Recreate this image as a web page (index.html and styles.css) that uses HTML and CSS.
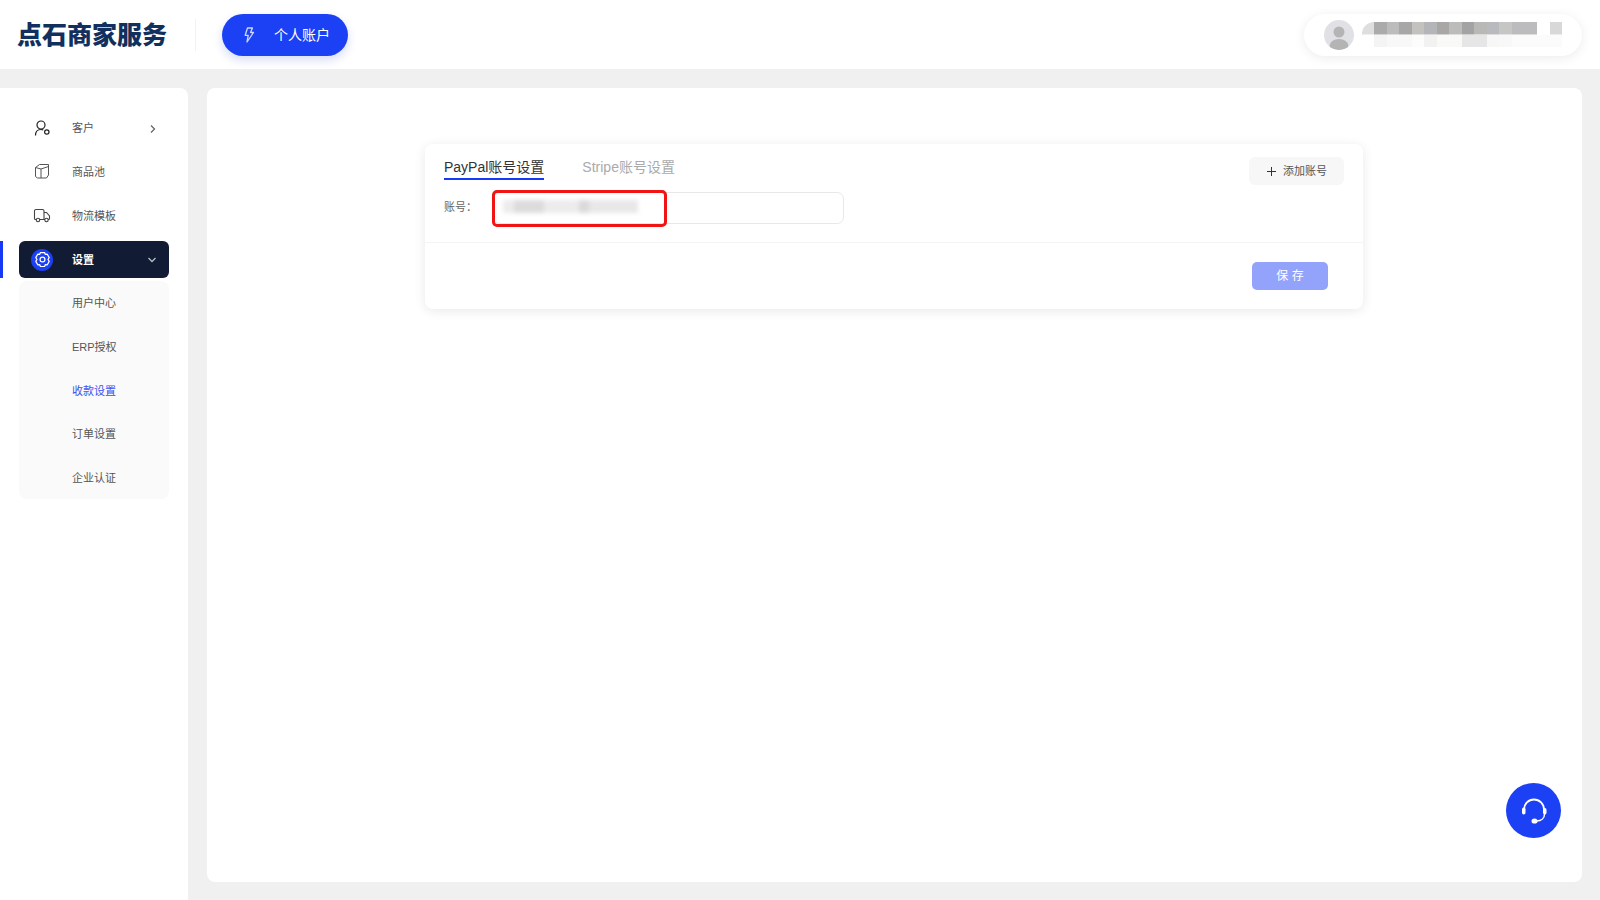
FILE: index.html
```html
<!DOCTYPE html>
<html lang="zh-CN">
<head>
<meta charset="utf-8">
<title>点石商家服务</title>
<link rel="stylesheet" href="styles.css">
</head>
<body>
<header class="topbar">
  <div class="logo">点石商家服务</div>
  <div class="top-divider"></div>
  <button class="account-btn">
    <svg class="bolt" viewBox="0 0 14 18" width="14" height="18" fill="none" stroke="#cfd8ff" stroke-width="1.300" stroke-linejoin="round"><path d="M5.500 2h5L8.500 6.500h3L5 16l1.200-6.700H3.200z"/></svg>
    <span class="account-text">个人账户</span>
  </button>
  <div class="user-pill">
    <svg class="avatar" viewBox="0 0 30 30" width="30" height="30"><circle cx="15" cy="15" r="15" fill="#e0e1e5"/><clipPath id="av"><circle cx="15" cy="15" r="15"/></clipPath><g clip-path="url(#av)" fill="#b4b4b4"><circle cx="15" cy="12" r="5.500"/><ellipse cx="15" cy="26" rx="9.500" ry="7"/></g></svg>
    <div class="pixelated"></div>
  </div>
</header>
<div class="body-row">
  <aside class="sidebar">
    <nav class="menu">
      <a class="menu-item">
        <svg class="mi" viewBox="0 0 18 18" width="18" height="18" fill="none" stroke="#222" stroke-width="1.200"><circle cx="8" cy="6" r="4"/><path d="M2.500 16.500c0-3.500 2-6 5.500-6 1 0 1.500.1 2.200.4"/><circle cx="13.800" cy="13" r="2.200"/></svg>
        <span class="mt">客户</span>
        <svg class="chev-r" viewBox="0 0 8 10" width="8" height="10" fill="none" stroke="#666" stroke-width="1.300"><path d="M2 1.500 5.500 5 2 8.500"/></svg>
      </a>
      <a class="menu-item">
        <svg class="mi mi-up" viewBox="0 0 18 18" width="18" height="18" fill="none" stroke="#555" stroke-width="1" stroke-linejoin="round"><path d="M2.500 5.500 6.500 2.500h9v10.500l-2 3H4.500l-2-1.500z"/><path d="M2.500 5.500 8 7l7.500-2.500M8 7v9"/></svg>
        <span class="mt">商品池</span>
      </a>
      <a class="menu-item">
        <svg class="mi mi-up" viewBox="0 0 18 18" width="18" height="18" fill="none" stroke="#444" stroke-width="1.100"><path d="M3 13.500H2.500a1 1 0 0 1-1-1V5a1.500 1.500 0 0 1 1.500-1.500h6.500A1.500 1.500 0 0 1 11 5v8.500H7M11 6.500h2.500l3 3.500v2.500a1 1 0 0 1-1 1H15M11 13.500h1"/><circle cx="5" cy="14" r="1.700"/><circle cx="13.500" cy="14" r="1.700"/></svg>
        <span class="mt">物流模板</span>
      </a>
      <div class="active-row">
        <span class="active-bar"></span>
        <a class="menu-item active">
          <span class="gear-wrap"><svg viewBox="0 0 18 18" width="17" height="17" fill="none" stroke="#fff" stroke-width="1.300" stroke-linejoin="round"><path d="M6.800 1.600h4.400l.7 1.900 2-.3 2.200 3.800-1.300 2 1.300 2-2.200 3.800-2-.3-.7 1.900H6.800l-.7-1.900-2 .3-2.200-3.800 1.300-2-1.300-2 2.200-3.800 2 .3z"/><circle cx="9" cy="9" r="2.600"/></svg></span>
          <span class="mt">设置</span>
          <svg class="chev-d" viewBox="0 0 10 8" width="10" height="8" fill="none" stroke="#b8bcc6" stroke-width="1.300"><path d="M1.500 2 5 5.500 8.500 2"/></svg>
        </a>
      </div>
      <div class="submenu">
        <a class="sub-item">用户中心</a>
        <a class="sub-item">ERP授权</a>
        <a class="sub-item current">收款设置</a>
        <a class="sub-item">订单设置</a>
        <a class="sub-item">企业认证</a>
      </div>
    </nav>
  </aside>
  <main class="main">
    <section class="card">
      <div class="card-top">
        <div class="tabs">
          <span class="tab on">PayPal账号设置</span>
          <span class="tab">Stripe账号设置</span>
        </div>
        <button class="add-btn"><svg class="plus" viewBox="0 0 9 9" width="9" height="9" fill="none" stroke="#333" stroke-width="1"><path d="M4.500 0v9M0 4.500h9"/></svg><span class="add-text">添加账号</span></button>
      </div>
      <div class="field">
        <label class="field-label">账号：</label>
        <div class="input">
          <div class="redact"></div>
          <div class="red-box"></div>
        </div>
      </div>
      <div class="card-foot">
        <button class="save-btn"><span class="save-text">保 存</span></button>
      </div>
    </section>
    <button class="help-btn">
      <svg viewBox="0 0 28 28" width="28" height="28" fill="none"><path d="M4 14V12.500a10 10 0 0 1 20 0V14" stroke="#fff" stroke-width="1.800"/><rect x="2" y="10.500" width="3.500" height="7" rx="1.700" fill="#fff"/><rect x="23" y="11" width="3.500" height="6.500" rx="1.700" fill="#fff"/><path d="M24.500 17c0 4-3 7-8 7" stroke="#fff" stroke-width="1.500"/><ellipse cx="14.500" cy="24" rx="3" ry="2.600" fill="#fff"/></svg>
    </button>
  </main>
</div>
</body>
</html>
```
FILE: styles.css
```css
* { box-sizing: border-box; }
html, body { margin: 0; height: 100%; }
body {
  width: 1600px;
  height: 900px;
  overflow: hidden;
  background: #f0f0f0;
  font-family: "Liberation Sans", "Noto Sans CJK SC", sans-serif;
  display: flex;
  flex-direction: column;
}
a { display: block; color: inherit; text-decoration: none; }
button { font-family: inherit; border: 0; padding: 0; }

.topbar {
  height: 69px;
  flex: none;
  background: #fff;
  display: flex;
  align-items: center;
  padding-left: 17px;
  padding-right: 18px;
}
.logo {
  width: 151px;
  font-size: 25px;
  line-height: 30px;
  font-weight: 900;
  color: #12305e;
  white-space: nowrap;
}
.top-divider { width: 1px; height: 32px; background: #f2f2f2; margin-left: 27px; }
.account-btn {
  margin-left: 26px;
  width: 126px;
  height: 42px;
  border-radius: 21px;
  background: #1c41f5;
  color: #fff;
  font-size: 14px;
  display: flex;
  align-items: center;
  padding-left: 20px;
  box-shadow: 0 4px 10px rgba(30, 60, 200, .18);
}
.bolt { margin-right: 18px; }
.account-text { margin-top: -2px; }
.user-pill {
  margin-left: auto;
  width: 278px;
  height: 42px;
  border-radius: 21px;
  background: #fff;
  box-shadow: 0 2px 12px rgba(0, 0, 0, .08);
  display: flex;
  align-items: center;
  padding-left: 20px;
}
.pixelated {
  margin-left: 8px;
  width: 200px;
  height: 25px;
  border-radius: 12px 0 0 12px;
  filter: blur(.6px);
  background:
    linear-gradient(90deg,
      #dedede 0 12.500px, #ababab 12.500px 25px, #bcbcbc 25px 37.500px, #a7a7a7 37.500px 50px,
      #c4c2bf 50px 62.500px, #b3b5b8 62.500px 75px, #a9a7a5 75px 87.500px, #bcbcba 87.500px 100px,
      #a3a3a3 100px 112.500px, #b8b8b6 112.500px 125px, #b8babd 125px 137.500px, #c6c6c4 137.500px 150px,
      #bcbcbe 150px 175px, #fff 175px 187.500px, #d8d8d8 187.500px 200px) top / 100% 12.500px no-repeat,
    linear-gradient(90deg,
      #fff 0 12.500px, #f4f4f4 12.500px 25px, #f8f8f8 25px 50px, #fcfcfc 50px 62.500px,
      #f2f2f2 62.500px 75px, #f9f9f7 75px 100px, #e6e6e6 100px 125px, #f7f7f7 125px 137.500px,
      #f8f8f8 137.500px 150px, #fbfbfb 150px 200px) bottom / 100% 12.500px no-repeat;
}

.body-row {
  flex: 1;
  min-height: 0;
  display: flex;
  gap: 19px;
  padding-top: 19px;
}
.sidebar {
  width: 188px;
  flex: none;
  background: #fff;
  border-radius: 0 8px 0 0;
  padding-top: 18px;
}
.menu-item {
  height: 44px;
  margin: 0 19px;
  display: flex;
  align-items: center;
  position: relative;
  font-size: 11px;
  color: #555;
}
.mi { margin-left: 14px; flex: none; }
.mi-up { margin-top: -2px; }
.mt { position: absolute; left: 53px; margin-top: -2px; }
.chev-r { position: absolute; left: 130px; top: 18px; }
.chev-d { position: absolute; left: 128px; top: 15px; }
.active-row { position: relative; height: 37px; margin-top: 3px; }
.active-bar { position: absolute; left: 0; top: 0; width: 3px; height: 37px; background: #1539f5; }
.menu-item.active {
  height: 37px;
  background: #111b33;
  border-radius: 6px;
  color: #fff;
  font-weight: 700;
}
.active .mt { margin-top: -1px; }
.gear-wrap {
  margin-left: 12px;
  width: 22px;
  height: 22px;
  border-radius: 50%;
  background: #1c41f5;
  display: flex;
  align-items: center;
  justify-content: center;
}
.submenu {
  margin: 3px 19px 0;
  height: 218px;
  background: #fafafa;
  border-radius: 8px;
  display: flex;
  flex-direction: column;
}
.sub-item {
  height: 43.800px;
  line-height: 44px;
  padding-left: 53px;
  font-size: 11px;
  color: #555;
}
.sub-item.current { color: #3a50f0; }

.main {
  position: relative;
  flex: 1;
  margin-right: 18px;
  margin-bottom: 18px;
  background: #fff;
  border-radius: 8px;
  padding: 56px 0 0 218px;
}
.card {
  width: 938px;
  height: 165px;
  border-radius: 8px;
  background: #fff;
  box-shadow: 0 2px 12px rgba(0, 0, 0, .09);
  padding-top: 13px;
}
.card-top {
  height: 35px;
  display: flex;
  justify-content: space-between;
  align-items: flex-start;
  padding: 0 19px;
}
.tabs { display: flex; gap: 38px; }
.tab { font-size: 14px; line-height: 21px; height: 23px; color: #aaa; }
.tab.on { color: #333; border-bottom: 2px solid #1539f5; }
.add-btn {
  width: 95px;
  height: 28px;
  border-radius: 6px;
  background: #f7f7f7;
  color: #555;
  font-size: 11px;
  display: flex;
  align-items: center;
  padding-left: 18px;
}
.plus { margin-right: 7px; }
.add-text { margin-top: -2px; }
.field {
  height: 51px;
  display: flex;
  align-items: flex-start;
  padding-left: 19px;
  border-bottom: 1px solid #f4f4f4;
}
.field-label { width: 49px; font-size: 11px; line-height: 30px; color: #666; }
.input {
  position: relative;
  width: 351px;
  height: 32px;
  border: 1px solid #e8e8e8;
  border-radius: 7px;
  background: #fff;
}
.redact {
  position: absolute;
  left: 9px;
  top: 7px;
  width: 135px;
  height: 13px;
  background: linear-gradient(90deg, #ececec 0 8%, #dcdcdc 8% 30%, #ececec 30% 56%, #dadada 56% 64%, #e8e8e8 64% 100%);
  filter: blur(2px);
}
.red-box {
  position: absolute;
  left: -2px;
  top: -3px;
  width: 175px;
  height: 37px;
  border: 3px solid #f01414;
  border-radius: 5px;
}
.card-foot {
  display: flex;
  justify-content: flex-end;
  padding: 19px 35px 0 0;
}
.save-btn {
  width: 76px;
  height: 28px;
  border-radius: 5px;
  background: #93a3fb;
  color: #fff;
  font-size: 12px;
}
.save-text { position: relative; top: -2px; }
.help-btn {
  position: absolute;
  right: 21px;
  bottom: 44px;
  width: 55px;
  height: 55px;
  border-radius: 50%;
  background: #1c41f5;
  display: flex;
  align-items: center;
  justify-content: center;
}
```
